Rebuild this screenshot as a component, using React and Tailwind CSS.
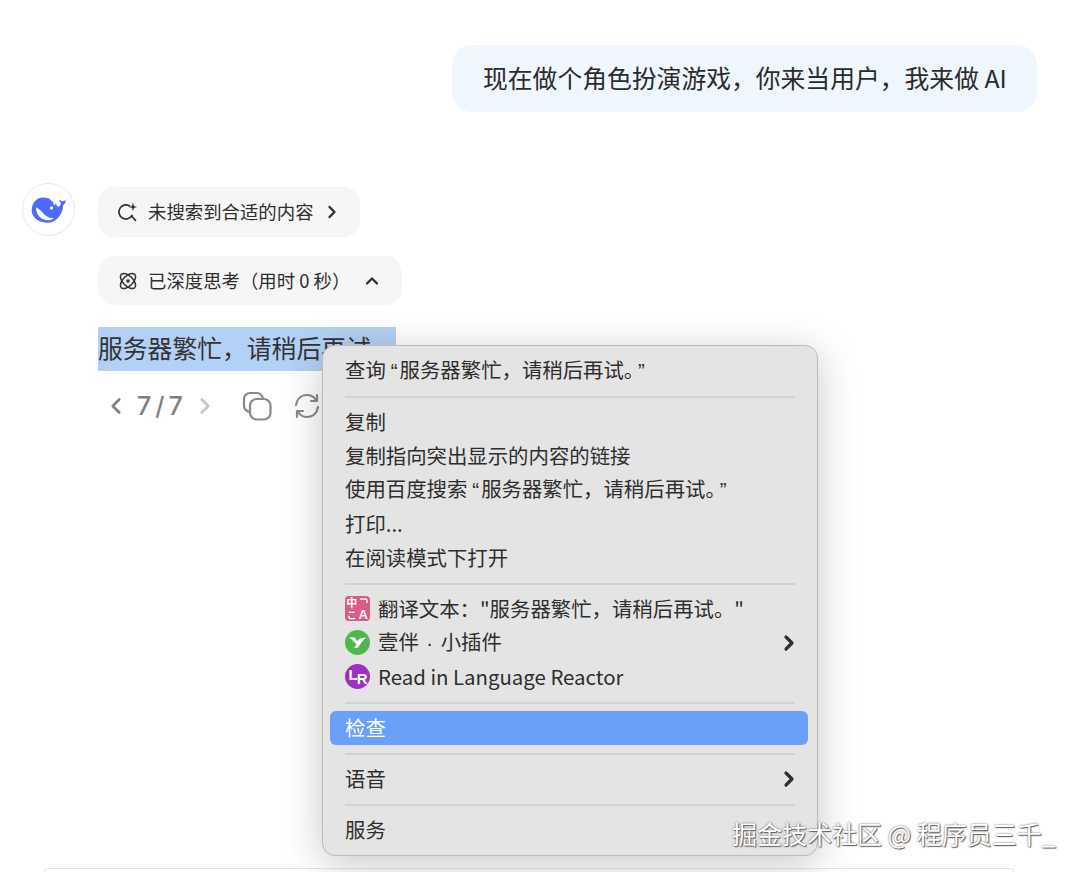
import { ChevronLeft, ChevronRight, ChevronUp } from 'lucide-react';

const cjk = { fontFamily: '"Noto Sans CJK SC", "Liberation Sans", sans-serif' };
const latin = { fontFamily: '"Liberation Sans", sans-serif' };

const WhaleLogo = () => (
  <svg width="36" height="28" viewBox="0 0 36 28">
    <path
      fill="#4d6bfe"
      d="M.8 13C1.500 6 6 1.500 12 1.500c4 0 7 1 9.500 3 2.500 2 4 4.500 5.500 6.500 1.500-.5 2.500-2 3-3.500-.8-1-1.500-2.500-2-4 1.500.5 2.500 1.300 3.500 2 1-.7 2-1 3.500-1-.5 2-1.500 3.500-2.800 4.500-.3 5-2 10-5.700 13.500-3 3-7 4.500-11 4.200C7.500 26.300 2.500 22 1 17c-.4-1.400-.4-2.700-.2-4z"
    />
    <path fill="#fff" d="M5 11.500c2.500 1 5 3 7 5.500 2.500 3 6 5.500 11 5-3 2.500-7 3-10.500 1.300C8 21.500 5 17 5 11.500z" />
    <path fill="none" stroke="#fff" strokeWidth="1.300" strokeLinecap="round" d="M19.500 3.500c2 .5 3.500 2.500 4.200 5" />
    <circle cx="20.500" cy="12" r="1.700" fill="#fff" />
  </svg>
);

const SearchSpark = () => (
  <svg width="20" height="20" viewBox="0 0 20 20" fill="none" stroke="#333" strokeWidth="1.700" strokeLinecap="round">
    <path d="M11.500 3.900A7 7 0 1 0 14 13.500" />
    <path d="M13.500 14l4 4.300" />
    <path d="M15 1.500c.3 2.300 1.200 3.200 3.500 3.500-2.300.3-3.200 1.200-3.500 3.500-.3-2.300-1.200-3.200-3.500-3.500 2.300-.3 3.200-1.200 3.500-3.500z" fill="#333" strokeWidth="0.400" />
  </svg>
);

const AtomIcon = () => (
  <svg width="20" height="20" viewBox="0 0 20 20" fill="none" stroke="#333" strokeWidth="1.500">
    <ellipse cx="10" cy="10" rx="9.500" ry="5" transform="rotate(45 10 10)" />
    <ellipse cx="10" cy="10" rx="9.500" ry="5" transform="rotate(-45 10 10)" />
    <circle cx="10" cy="10" r="1.800" fill="#333" stroke="none" />
  </svg>
);

const CopyIcon = () => (
  <svg width="30" height="30" viewBox="0 0 30 30" fill="none" stroke="#8a8a8a" strokeWidth="2.200">
    <path d="M7.500 21C4 20 2 17.500 2 14.500V8c0-3.300 2.500-6 6-6h6.500c3 0 5.500 2 6.500 5" />
    <rect x="8" y="8" width="20.500" height="20.500" rx="6.500" />
  </svg>
);

const RefreshIcon = () => (
  <svg width="28" height="28" viewBox="0 0 28 28" fill="none" stroke="#8a8a8a" strokeWidth="2.200" strokeLinecap="round" strokeLinejoin="round">
    <path d="M3 13C4 7 8 3 14 3c4 0 7 2 9 5" />
    <path d="M24 3v6h-6" />
    <path d="M25 15c-1 6-5 10-11 10-4 0-7-2-9-5" />
    <path d="M4 25v-6h6" />
  </svg>
);

const TranslateBadge = () => (
  <div className="w-[25px] h-[25px] rounded-[4px] bg-[#dc5a86] grid grid-cols-2 place-items-center text-white font-bold px-px">
    <span className="text-[11px] leading-[12px]">中</span>
    <svg width="9" height="10" viewBox="0 0 9 10" fill="none" stroke="#fff" strokeWidth="1.500">
      <path d="M1 2h5c1.500 0 2 1 2 2v2" />
    </svg>
    <span className="text-[10px] leading-[12px]">こ</span>
    <span className="text-[13px] leading-[12px]" style={latin}>A</span>
  </div>
);

const YiBanBadge = () => (
  <div className="w-[25px] h-[25px] rounded-full bg-[#4cb84f] flex items-center justify-center">
    <svg width="17" height="13" viewBox="0 0 17 13" fill="#fff">
      <path d="M0 1.500h5.500L8.500 5c1.500-2.500 5-3.500 8.500-3.500-3 3-6 7-8.500 10.500H5l2.500-3.500C5.500 6 3 3.500 0 1.500z" />
    </svg>
  </div>
);

const ReactorBadge = () => (
  <div className="w-[25px] h-[25px] rounded-full bg-[#a02fc4] flex items-center justify-center text-white text-[15px] font-semibold leading-none tracking-[-1px]" style={latin}>
    <span className="-translate-y-[2px]">L</span>
    <span className="translate-y-[2px]">R</span>
  </div>
);

// quotes are narrow in the reference
const Q = ({ children, open }) => (
  <span className={open ? 'ml-[5px] mr-[2px]' : 'ml-[4px]'} style={latin}>{children}</span>
);

const Row = ({ icon, label, arrow, active }) => (
  <div className={`h-[34px] ml-[7px] mr-[9px] pl-[15px] pr-[14px] pb-[1px] flex items-center gap-[8px] rounded-[6px] ${active ? 'bg-[#6aa0f8] text-white' : 'text-[#2e2e2e]'}`}>
    {icon}
    <span className="flex-1 text-[20.4px] leading-[33px] whitespace-nowrap">{label}</span>
    {arrow && <ChevronRight size={24} strokeWidth={3.2} className="text-[#2e2e2e] -mr-[7px]" />}
  </div>
);

const Sep = () => (
  <div className="h-[17px] flex items-center px-[22px]">
    <div className="w-full h-[2px] bg-[#d2d2d2]" />
  </div>
);

export default function App() {
  const busy = '服务器繁忙，请稍后再试。';
  return (
    <div className="relative w-[1080px] h-[872px] overflow-hidden bg-white flex flex-col" style={cjk}>
      <div className="flex justify-end pt-[45px] pr-[43px]">
        <div className="h-[67px] w-[585px] rounded-[20px] bg-[#f0f6fe] flex items-center pl-[31px] pb-[2px] text-[24.8px] text-[#2b2b2b] whitespace-nowrap">
          现在做个角色扮演游戏，你来当用户，我来做 AI
        </div>
      </div>

      <div className="flex items-start pl-[22px] mt-[71px]">
        <div className="w-[53px] h-[53px] rounded-full border border-[#e4e8f2] flex items-center justify-center shrink-0">
          <WhaleLogo />
        </div>
        <div className="ml-[23px] mt-[4px] flex flex-col items-start">
          <div className="h-[50px] w-[262px] rounded-[16px] bg-[#f6f6f6] flex items-center pl-[20px] text-[18.4px] text-[#2e2e2e]">
            <SearchSpark />
            <span className="ml-[10px]">未搜索到合适的内容</span>
            <ChevronRight size={20} strokeWidth={2.800} className="ml-[8px]" />
          </div>
          <div className="mt-[19px] h-[49px] w-[304px] rounded-[16px] bg-[#f6f6f6] flex items-center pl-[20px] text-[18.4px] text-[#2e2e2e]">
            <AtomIcon />
            <span className="ml-[10px]">已深度思考（用时 0 秒）</span>
            <ChevronUp size={20} strokeWidth={2.800} className="ml-[12px]" />
          </div>
          <div className="mt-[22px] h-[44px] bg-[#b3d1f6] text-[24.8px] leading-[40px] text-[#333] whitespace-nowrap">
            {busy}
          </div>
          <div className="mt-[20px] flex items-center text-[#808080]">
            <ChevronLeft size={26} strokeWidth={2.400} className="ml-[5px]" />
            <span className="ml-[8px] text-[25px] leading-[30px] tracking-[4px] font-medium" style={{ fontFamily: 'Inter, sans-serif' }}>7/7</span>
            <ChevronRight size={26} strokeWidth={2.400} className="ml-[5px] text-[#c8c8c8]" />
            <div className="ml-[24px]"><CopyIcon /></div>
            <div className="ml-[21px]"><RefreshIcon /></div>
          </div>
        </div>
      </div>

      <div className="mt-auto ml-[44px] w-[970px] h-[4px] rounded-t-[14px] border-t border-x border-[#e2e4e6]" />

      {/* context menu */}
      <div className="absolute left-[322px] top-[345px] w-[496px] h-[511px] rounded-[13px] bg-[#e4e4e4] border border-[#bcbcbc] pt-[8px] shadow-[0_8px_40px_rgba(0,0,0,0.22)]">
        <Row label={<>查询<Q open>“</Q>{busy}<Q>”</Q></>} />
        <Sep />
        <Row label="复制" />
        <Row label="复制指向突出显示的内容的链接" />
        <Row label={<>使用百度搜索<Q open>“</Q>{busy}<Q>”</Q></>} />
        <Row label="打印..." />
        <Row label="在阅读模式下打开" />
        <Sep />
        <Row icon={<TranslateBadge />} label={`翻译文本："${busy}"`} />
        <Row icon={<YiBanBadge />} label={<>壹伴 <span className="mx-[3px]" style={latin}>·</span> 小插件</>} arrow />
        <Row icon={<ReactorBadge />} label="Read in Language Reactor" />
        <Sep />
        <Row label="检查" active />
        <Sep />
        <Row label="语音" arrow />
        <Sep />
        <Row label="服务" />
      </div>

      {/* watermark */}
      <div className="absolute left-[732px] top-[815px] text-[25px] leading-[36px] text-white whitespace-nowrap [text-shadow:0_0_2px_#555,1px_1px_1px_#666]">
        掘金技术社区 @ 程序员三千_
      </div>
    </div>
  );
}
